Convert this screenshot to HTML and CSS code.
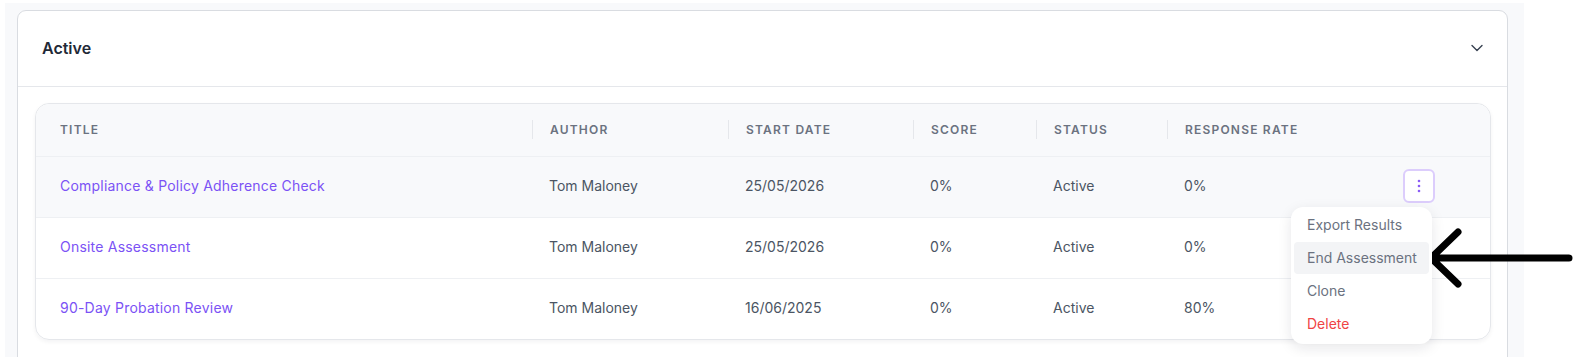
FILE: index.html
```html
<!DOCTYPE html>
<html>
<head>
  <title>Assessments</title>
  <link rel="stylesheet" href="styles.css">
</head>
<body>
  <div class="page">
    <div class="card">
      <div class="card-head">
        <h2>Active</h2>
        <svg class="chevron" width="12" height="8" viewBox="0 0 12 8">
          <path d="M1 1.5 L6 6.5 L11 1.5" fill="none" stroke="#374151" stroke-width="1.4" stroke-linecap="round" stroke-linejoin="round"/>
        </svg>
      </div>
      <div class="card-body">
        <div class="table">
          <div class="row head">
            <div class="cell">Title</div>
            <div class="cell">Author</div>
            <div class="cell">Start Date</div>
            <div class="cell">Score</div>
            <div class="cell">Status</div>
            <div class="cell">Response Rate</div>
            <div class="cell"></div>
          </div>

          <div class="row hover">
            <div class="cell"><a href="#">Compliance &amp; Policy Adherence Check</a></div>
            <div class="cell">Tom Maloney</div>
            <div class="cell">25/05/2026</div>
            <div class="cell">0%</div>
            <div class="cell">Active</div>
            <div class="cell">0%</div>
            <div class="cell actions">
              <span class="menu-wrap">
                <button class="dots">
                  <svg width="4" height="14" viewBox="0 0 4 14">
                    <circle cx="2" cy="2" r="1.3" fill="#8b5cf6"/>
                    <circle cx="2" cy="7" r="1.3" fill="#8b5cf6"/>
                    <circle cx="2" cy="12" r="1.3" fill="#8b5cf6"/>
                  </svg>
                </button>
                <div class="menu">
                  <div class="item">Export Results</div>
                  <div class="item active">End Assessment</div>
                  <div class="item">Clone</div>
                  <div class="item danger">Delete</div>
                </div>
              </span>
            </div>
          </div>

          <div class="row">
            <div class="cell"><a href="#">Onsite Assessment</a></div>
            <div class="cell">Tom Maloney</div>
            <div class="cell">25/05/2026</div>
            <div class="cell">0%</div>
            <div class="cell">Active</div>
            <div class="cell">0%</div>
            <div class="cell"></div>
          </div>

          <div class="row">
            <div class="cell"><a href="#">90-Day Probation Review</a></div>
            <div class="cell">Tom Maloney</div>
            <div class="cell">16/06/2025</div>
            <div class="cell">0%</div>
            <div class="cell">Active</div>
            <div class="cell">80%</div>
            <div class="cell"></div>
          </div>
        </div>
      </div>
    </div>
  </div>

  <!-- pointer arrow drawn over the menu -->
  <svg class="pointer" width="160" height="70" viewBox="1420 225 160 70">
    <path d="M1569 258 H1431 M1458 232 L1431 258 L1458 284" fill="none" stroke="#000" stroke-width="7" stroke-linecap="round" stroke-linejoin="round"/>
  </svg>
</body>
</html>
```

FILE: styles.css
```css
/* Global styles */
body {
  margin: 0;
  background-color: #fff;
  color: #4b5563;
  font-family: Inter, "Noto Sans", sans-serif;
  font-size: 14px;
  overflow: hidden;
}

.page {
  margin: 3px 0 0 5px;
  width: 1519px;
  height: 354px;
  padding: 7px 16px 0 12px;
  box-sizing: border-box;
  background-color: #f8f9fb;
}

.card {
  background-color: #fff;
  border: 1px solid #d9dce1;
  border-radius: 9px;
  height: 400px;
}

.card-head {
  display: flex;
  align-items: center;
  justify-content: space-between;
  height: 76px;
  padding: 0 24px 2px 24px;
  box-sizing: border-box;
  border-bottom: 1px solid #e5e7eb;
}

.card-head h2 {
  margin: 0;
  font-size: 16px;
  font-weight: 600;
  color: #1f2937;
}

.chevron {
  margin-top: 1px;
}

.card-body {
  padding: 16px 16px 0 17px;
}

/* table */
.table {
  border: 1px solid #e5e7eb;
  border-radius: 14px;
  overflow: visible;
  box-shadow: 0 2px 4px rgba(17, 24, 39, 0.05);
}

.row {
  display: grid;
  grid-template-columns: 496px 196px 185px 123px 131px 222px 1fr;
  align-items: center;
  height: 61px;
  padding-bottom: 3px;
  border-top: 1px solid #eef0f3;
  box-sizing: border-box;
}

.row:last-child {
  border-radius: 0 0 14px 14px;
}

.row .cell {
  padding-left: 17px;
}

.row .cell:first-child {
  padding-left: 24px;
}

.row a {
  color: #7b52f5;
  text-decoration: none;
  letter-spacing: 0.015em;
}

.row.head {
  height: 52px;
  padding-bottom: 2px;
  border-top: none;
  background-color: #f8f9fb;
  border-radius: 14px 14px 0 0;
}

.row.head .cell {
  font-size: 12px;
  font-weight: 600;
  text-transform: uppercase;
  letter-spacing: 0.1em;
  color: #6b7280;
  line-height: 19px;
}

.row.head .cell + .cell {
  border-left: 1px solid #e5e7eb;
}

.row.hover {
  background-color: #f8f9fb;
}

/* action menu */
.actions {
  padding-left: 14px !important;
}

.menu-wrap {
  position: relative;
  display: inline-block;
}

.dots {
  display: flex;
  align-items: center;
  justify-content: center;
  width: 32px;
  height: 34px;
  padding: 0;
  background-color: #fff;
  border: 2px solid #dccdfc;
  border-radius: 6px;
}

.menu {
  position: absolute;
  top: 38px;
  right: 3px;
  width: 141px;
  padding: 2px 3px 3px;
  box-sizing: border-box;
  background-color: #fff;
  border-radius: 12px;
  box-shadow: 0 4px 14px rgba(17, 24, 39, 0.1);
  z-index: 2;
}

.menu .item {
  height: 33px;
  line-height: 31px;
  padding-left: 13px;
  color: #6b7280;
  border-radius: 4px;
  white-space: nowrap;
}

.menu .item.active {
  height: 32px;
  margin-bottom: 1px;
  background-color: #f3f4f6;
}

.menu .item.danger {
  color: #ef4444;
}

.pointer {
  position: absolute;
  left: 1420px;
  top: 225px;
}
```
